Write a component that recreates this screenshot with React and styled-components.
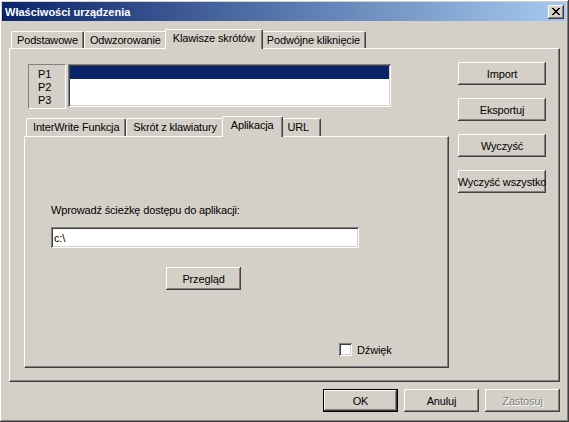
import React from 'react';
import styled, { createGlobalStyle } from 'styled-components';

const GlobalStyle = createGlobalStyle`
  html, body {
    margin: 0;
    padding: 0;
    background: #d4d0c8;
  }
  body {
    font-family: 'Liberation Sans', Arial, sans-serif;
    font-size: 11px;
    letter-spacing: -0.15px;
    color: #000;
  }
  * {
    box-sizing: border-box;
  }
`;

// classic 3D edges
const raised = `
  box-shadow: inset -1px -1px 0 #404040, inset 1px 1px 0 #ffffff,
    inset -2px -2px 0 #808080, inset 2px 2px 0 #d4d0c8;
`;
const sunken = `
  box-shadow: inset 1px 1px 0 #808080, inset -1px -1px 0 #ffffff,
    inset 2px 2px 0 #404040, inset -2px -2px 0 #d4d0c8;
`;

const Window = styled.div`
  width: 569px;
  height: 422px;
  padding: 2px 3px 3px 2px;
  background: #d4d0c8;
  display: flex;
  flex-direction: column;
  ${raised}
`;

const TitleBar = styled.div`
  height: 19px;
  display: flex;
  align-items: center;
  padding: 0 2px 0 3px;
  background: linear-gradient(to right, #0a246a, #a6caf0);
  color: #fff;
  font-weight: bold;
  font-size: 11px;
  letter-spacing: 0;
`;

const CloseBtn = styled.div`
  margin-left: auto;
  width: 16px;
  height: 14px;
  display: flex;
  align-items: center;
  justify-content: center;
  background: #d4d0c8;
  ${raised}
`;

const Content = styled.div`
  flex: 1;
  display: flex;
  flex-direction: column;
  padding: 8px 6px 7px 7px;
`;

const TabRow = styled.div`
  display: flex;
  align-items: flex-end;
  height: ${p => p.$h}px;
  padding-left: 2px;
`;

const Tab = styled.div`
  position: relative;
  z-index: ${p => (p.$active ? 2 : 1)};
  height: ${p => p.$h + (p.$active ? 3 : 0)}px;
  min-width: ${p => p.$min || 0}px;
  margin: 0 ${p => (p.$active ? -2 : 0)}px ${p => (p.$active ? -1 : 0)}px;
  padding: 2px ${p => p.$pad + (p.$active ? 2 : 0)}px 0;
  line-height: 13px;
  white-space: nowrap;
  background: #d4d0c8;
  border-top: 1px solid #fff;
  border-left: 1px solid #fff;
  border-right: 1px solid #404040;
  border-radius: 2px 2px 0 0;
  box-shadow: inset -1px 0 0 #808080;
`;

const Panel = styled.div`
  background: #d4d0c8;
  border: 1px solid;
  border-color: #fff #404040 #404040 #fff;
  box-shadow: inset -1px -1px 0 #808080;
`;

const OuterPanel = styled(Panel)`
  flex: 1;
  display: flex;
  gap: 9px;
  padding: 13px 13px 13px 14px;
`;

const LeftCol = styled.div`
  width: 425px;
  display: flex;
  flex-direction: column;
`;

const RightCol = styled.div`
  width: 88px;
  display: flex;
  flex-direction: column;
  gap: 13px;
`;

const PRow = styled.div`
  display: flex;
  gap: 2px;
  margin: 2px 0 7px 4px;
`;

const PBox = styled.div`
  width: 38px;
  height: 45px;
  padding: 3px 0 0 9px;
  line-height: 13px;
  border: 1px solid;
  border-color: #808080 #fff #fff #808080;
`;

const ListBox = styled.div`
  width: 323px;
  height: 43px;
  padding: 2px;
  background: #fff;
  ${sunken}
`;

const ListItem = styled.div`
  height: 13px;
  background: ${p => (p.$selected ? '#0a246a' : 'transparent')};
`;

const InnerPanel = styled(Panel)`
  flex: 1;
  display: flex;
  flex-direction: column;
  padding: 67px 0 11px 26px;
`;

const Label = styled.div`
  line-height: 13px;
`;

const TextInput = styled.div`
  width: 308px;
  height: 21px;
  margin-top: 10px;
  padding: 0 3px;
  display: flex;
  align-items: center;
  background: #fff;
  ${sunken}
`;

const Button = styled.div`
  width: ${p => p.$w || 75}px;
  height: 23px;
  flex-shrink: 0;
  display: flex;
  align-items: center;
  justify-content: center;
  overflow: hidden;
  white-space: nowrap;
  background: #d4d0c8;
  color: ${p => (p.$disabled ? '#808080' : '#000')};
  text-shadow: ${p => (p.$disabled ? '1px 1px 0 #fff' : 'none')};
  border: ${p => (p.$default ? '1px solid #000' : 'none')};
  ${raised}

  span {
    flex-shrink: 0;
  }
`;

const BrowseButton = styled(Button)`
  margin: 19px 0 0 115px;
`;

const Spacer = styled.div`
  flex: 1;
`;

const CheckRow = styled.div`
  display: flex;
  align-items: center;
  gap: 5px;
  margin-left: 288px;
  height: 13px;
`;

const CheckBox = styled.div`
  width: 13px;
  height: 13px;
  background: #fff;
  ${sunken}
`;

const Footer = styled.div`
  display: flex;
  justify-content: flex-end;
  gap: 6px;
  margin-top: 7px;
`;

const CloseGlyph = () => (
  <svg width="8" height="7" viewBox="0 0 8 7" shapeRendering="crispEdges">
    <path
      fill="#000"
      d="M0 0h2v1H0zM6 0h2v1H6zM1 1h2v1H1zM5 1h2v1H5zM2 2h4v1H2zM3 3h2v1H3zM2 4h4v1H2zM1 5h2v1H1zM5 5h2v1H5zM0 6h2v1H0zM6 6h2v1H6z"
    />
  </svg>
);

const mainTabs = ['Podstawowe', 'Odwzorowanie', 'Klawisze skrótów', 'Podwójne kliknięcie'];
const subTabs = ['InterWrite Funkcja', 'Skrót z klawiatury', 'Aplikacja', 'URL'];
const sideButtons = ['Import', 'Eksportuj', 'Wyczyść', 'Wyczyść wszystko'];

const App = () => {
  return (
    <>
      <GlobalStyle />
      <Window>
        <TitleBar>
          Właściwości urządzenia
          <CloseBtn>
            <CloseGlyph />
          </CloseBtn>
        </TitleBar>
        <Content>
          <TabRow $h={19}>
            {mainTabs.map(t => (
              <Tab key={t} $h={17} $pad={5} $active={t === 'Klawisze skrótów'}>
                {t}
              </Tab>
            ))}
          </TabRow>
          <OuterPanel>
            <LeftCol>
              <PRow>
                <PBox>
                  <div>P1</div>
                  <div>P2</div>
                  <div>P3</div>
                </PBox>
                <ListBox>
                  <ListItem $selected />
                  <ListItem />
                  <ListItem />
                </ListBox>
              </PRow>
              <TabRow $h={20}>
                {subTabs.map(t => (
                  <Tab
                    key={t}
                    $h={18}
                    $pad={6}
                    $min={t === 'URL' ? 40 : 0}
                    $active={t === 'Aplikacja'}
                  >
                    {t}
                  </Tab>
                ))}
              </TabRow>
              <InnerPanel>
                <Label>Wprowadź ścieżkę dostępu do aplikacji:</Label>
                <TextInput>c:\</TextInput>
                <BrowseButton>
                  <span>Przegląd</span>
                </BrowseButton>
                <Spacer />
                <CheckRow>
                  <CheckBox />
                  Dźwięk
                </CheckRow>
              </InnerPanel>
            </LeftCol>
            <RightCol>
              {sideButtons.map(b => (
                <Button key={b} $w={88}>
                  <span>{b}</span>
                </Button>
              ))}
            </RightCol>
          </OuterPanel>
          <Footer>
            <Button $default>
              <span>OK</span>
            </Button>
            <Button>
              <span>Anuluj</span>
            </Button>
            <Button $disabled>
              <span>Zastosuj</span>
            </Button>
          </Footer>
        </Content>
      </Window>
    </>
  );
};

export default App;
